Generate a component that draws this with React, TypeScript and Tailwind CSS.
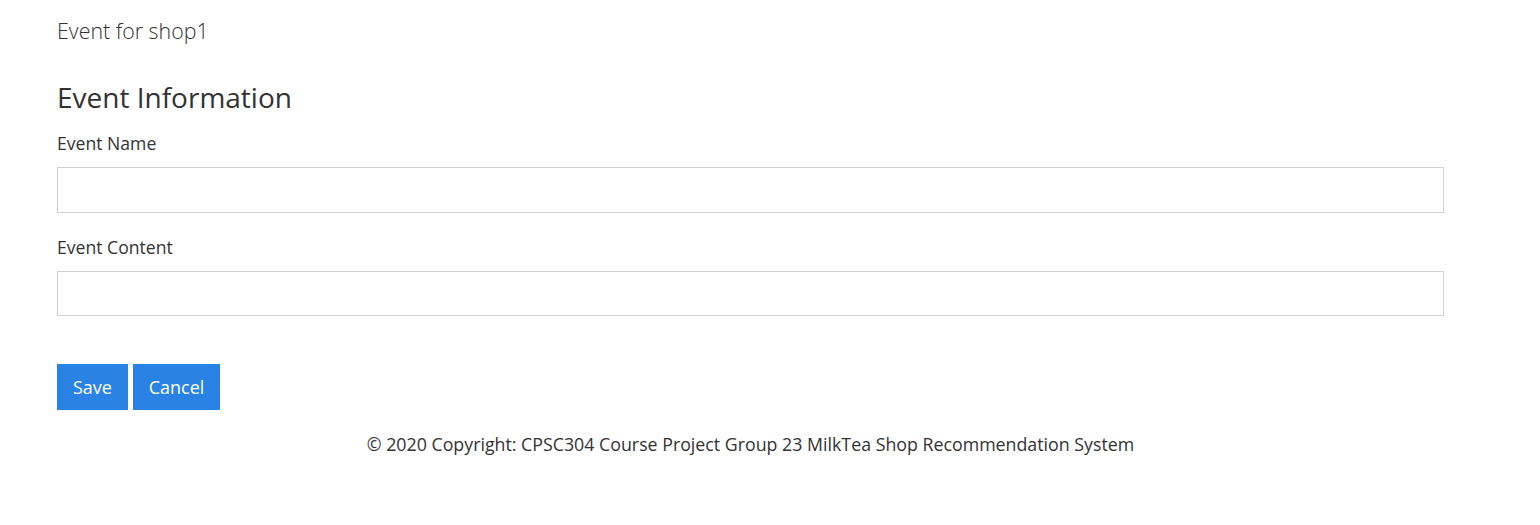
export default function App() {
  return (
    <div className="min-h-[525px] bg-white text-[#333] font-['Open_Sans',sans-serif]">
      <div className="w-[1387px] ml-[57px]">
        <div className="h-[62px] pt-[16px] text-[21.4px] font-light leading-[30px] text-[#333]">
          Event for shop1
        </div>
        <form className="pt-[17px]">
          <h2 className="text-[28px] leading-[36px] text-[#333] mb-[15px]">Event Information</h2>
          <div className="mb-[21px]">
            <label className="block text-[17.6px] leading-[26px] mb-[11px]">Event Name</label>
            <input type="text" className="block w-full h-[46px] border border-[#ced4da] bg-white px-3 outline-none" />
          </div>
          <div className="mb-[48px]">
            <label className="block text-[17.6px] leading-[26px] mb-[11px]">Event Content</label>
            <input type="text" className="block w-full h-[45px] border border-[#ced4da] bg-white px-3 outline-none" />
          </div>
          <div className="flex gap-[5px]">
            <button type="button" className="h-[46px] w-[71px] bg-[#2a82e4] text-white text-[18px]">Save</button>
            <button type="button" className="h-[46px] w-[87px] bg-[#2a82e4] text-white text-[18px]">Cancel</button>
          </div>
        </form>
        <footer className="pt-[21px] text-center text-[17.8px] leading-[26px] text-[#333]">
          © 2020 Copyright: CPSC304 Course Project Group 23 MilkTea Shop Recommendation System
        </footer>
      </div>
    </div>
  );
}
